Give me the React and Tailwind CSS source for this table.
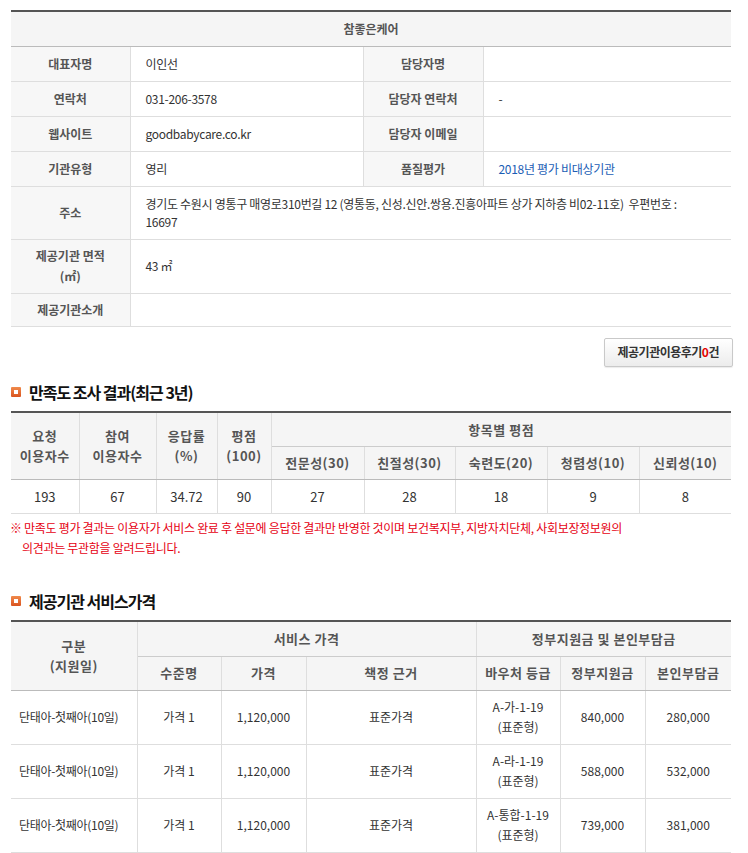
import React from 'react';

const font = { fontFamily: '"Noto Sans CJK KR", "Noto Sans", sans-serif' };

// label cell / value cell helpers for the info table
const Th = ({ children, className = '', ...rest }) => (
  <th {...rest} className={`bg-[#f7f7f7] border border-[#dedede] text-[12px] font-bold text-[#555] text-center align-middle ${className}`}>
    {children}
  </th>
);

const Td = ({ children, className = 'text-[#333]', ...rest }) => (
  <td {...rest} className={`border border-[#dedede] text-[12px] tracking-[-0.3px] pl-[15px] align-middle ${className}`}>
    {children}
  </td>
);

function SectionTitle({ children, className = '' }) {
  return (
    <div className={`flex items-center gap-[8px] h-[20px] pl-[11px] ${className}`}>
      <span className="w-[10px] h-[10px] rounded-[1px] bg-gradient-to-b from-[#f08a4b] to-[#d9531e] flex items-center justify-center">
        <span className="w-[4px] h-[4px] bg-white" />
      </span>
      <h3 className="text-[16px] font-bold text-[#111] tracking-[-1px]">{children}</h3>
    </div>
  );
}

const sat = {
  heads: ['전문성(30)', '친절성(30)', '숙련도(20)', '청렴성(10)', '신뢰성(10)'],
  values: ['193', '67', '34.72', '90', '27', '28', '18', '9', '8'],
};

const prices = [
  { grade: 'A-가-1-19', gov: '840,000', self: '280,000' },
  { grade: 'A-라-1-19', gov: '588,000', self: '532,000' },
  { grade: 'A-통합-1-19', gov: '739,000', self: '381,000' },
];

export default function App() {
  return (
    <div className="w-[748px] min-h-[853px] bg-white pt-[10px] overflow-hidden" style={font}>

      {/* --- 기관 정보 --- */}
      <table className="ml-[11px] w-[720px] table-fixed border-collapse border-t-2 border-t-[#555] border-b border-b-[#666] [&_tr>*:first-child]:border-l-0 [&_tr>*:last-child]:border-r-0">
        <colgroup>
          <col className="w-[119px]" />
          <col className="w-[233px]" />
          <col className="w-[120px]" />
          <col />
        </colgroup>
        <tbody>
          <tr className="h-[35px]">
            <th colSpan={4} className="bg-[#f5f5f5] border-b border-b-[#bbb] text-[12px] font-bold text-[#555] text-center">
              참좋은케어
            </th>
          </tr>
          <tr className="h-[35px]">
            <Th>대표자명</Th>
            <Td>이인선</Td>
            <Th>담당자명</Th>
            <Td></Td>
          </tr>
          <tr className="h-[35px]">
            <Th>연락처</Th>
            <Td>031-206-3578</Td>
            <Th>담당자 연락처</Th>
            <Td>-</Td>
          </tr>
          <tr className="h-[35px]">
            <Th>웹사이트</Th>
            <Td>goodbabycare.co.kr</Td>
            <Th>담당자 이메일</Th>
            <Td></Td>
          </tr>
          <tr className="h-[35px]">
            <Th>기관유형</Th>
            <Td>영리</Td>
            <Th>품질평가</Th>
            <Td className="text-[#1a5db5]">2018년 평가 비대상기관</Td>
          </tr>
          <tr className="h-[53px]">
            <Th>주소</Th>
            <Td colSpan={3} className="text-[#333] leading-[18px]">
              <span className="whitespace-nowrap">
                경기도 수원시 영통구 매영로310번길 12 (영통동, 신성.신안.쌍용.진흥아파트 상가 지하층 비02-11호)&nbsp; 우편번호 :
              </span>
              <br />
              16697
            </Td>
          </tr>
          <tr className="h-[54px]">
            <Th className="leading-[20px]">제공기관 면적<br />(㎡)</Th>
            <Td colSpan={3}>43 ㎡</Td>
          </tr>
          <tr className="h-[33px]">
            <Th>제공기관소개</Th>
            <Td colSpan={3}></Td>
          </tr>
        </tbody>
      </table>

      <div className="flex justify-end pr-[15px] mt-[11px]">
        <button className="h-[29px] px-[13px] rounded-[2px] border border-[#c9c9c9] bg-gradient-to-b from-white to-[#ececec] text-[12px] font-bold text-[#333] tracking-[-0.5px] shadow-[0_1px_1px_rgba(0,0,0,0.08)]">
          제공기관이용후기<span className="text-[#e30000]">0</span>건
        </button>
      </div>

      {/* --- 만족도 --- */}
      <SectionTitle className="mt-[15px]">만족도 조사 결과(최근 3년)</SectionTitle>

      <table className="ml-[11px] mt-[9px] w-[720px] table-fixed border-collapse border-t-2 border-t-[#555] border-b border-b-[#666] text-center [&_tr>*:first-child]:border-l-0 [&_tr>*:last-child]:border-r-0">
        <colgroup>
          <col className="w-[68px]" />
          <col className="w-[77px]" />
          <col className="w-[61px]" />
          <col className="w-[54px]" />
          <col className="w-[93px]" />
          <col className="w-[91px]" />
          <col className="w-[92px]" />
          <col className="w-[92px]" />
          <col />
        </colgroup>
        <thead className="text-[13px] font-bold text-[#555] bg-[#f5f5f5] tracking-[0.5px]">
          <tr className="h-[35px]">
            <th rowSpan={2} className="border border-[#dedede] border-b-[#bbb] leading-[20px]">요청<br />이용자수</th>
            <th rowSpan={2} className="border border-[#dedede] border-b-[#bbb] leading-[20px]">참여<br />이용자수</th>
            <th rowSpan={2} className="border border-[#dedede] border-b-[#bbb] leading-[20px]">응답률<br />(%)</th>
            <th rowSpan={2} className="border border-[#dedede] border-b-[#bbb] leading-[20px]">평점<br />(100)</th>
            <th colSpan={5} className="border border-[#dedede] border-b-[#ccc]">항목별 평점</th>
          </tr>
          <tr className="h-[33px]">
            {sat.heads.map((h) => (
              <th key={h} className="border border-[#dedede] border-b-[#bbb]">{h}</th>
            ))}
          </tr>
        </thead>
        <tbody>
          <tr className="h-[34px]">
            {sat.values.map((v, i) => (
              <td key={i} className="border border-[#dedede] text-[13px] text-[#333]">{v}</td>
            ))}
          </tr>
        </tbody>
      </table>

      <p className="mt-[4px] pl-[10px] text-[12px] leading-[20px] text-[#e60012] tracking-[-0.3px]">
        ※ 만족도 평가 결과는 이용자가 서비스 완료 후 설문에 응답한 결과만 반영한 것이며 보건복지부, 지방자치단체, 사회보장정보원의<br />
        <span className="pl-[12px]">의견과는 무관함을 알려드립니다.</span>
      </p>

      {/* --- 서비스 가격 --- */}
      <SectionTitle className="mt-[33px]">제공기관 서비스가격</SectionTitle>

      <table className="ml-[11px] mt-[9px] w-[720px] table-fixed border-collapse border-t-2 border-t-[#555] text-center [&_tr>*:first-child]:border-l-0 [&_tr>*:last-child]:border-r-0">
        <colgroup>
          <col className="w-[126px]" />
          <col className="w-[84px]" />
          <col className="w-[85px]" />
          <col className="w-[170px]" />
          <col className="w-[84px]" />
          <col className="w-[85px]" />
          <col />
        </colgroup>
        <thead className="text-[13px] font-bold text-[#555] bg-[#f5f5f5] tracking-[0.5px]">
          <tr className="h-[35px]">
            <th rowSpan={2} className="border border-[#dedede] border-b-[#bbb] leading-[20px] align-top pt-[14px]">구분<br />(지원일)</th>
            <th colSpan={3} className="border border-[#dedede] border-b-[#ccc]">서비스 가격</th>
            <th colSpan={3} className="border border-[#dedede] border-b-[#ccc]">정부지원금 및 본인부담금</th>
          </tr>
          <tr className="h-[34px]">
            {['수준명', '가격', '책정 근거', '바우처 등급', '정부지원금', '본인부담금'].map((h) => (
              <th key={h} className="border border-[#dedede] border-b-[#bbb]">{h}</th>
            ))}
          </tr>
        </thead>
        <tbody className="text-[12px] text-[#333]">
          {prices.map((p) => (
            <tr key={p.grade} className="h-[54px]">
              <td className="border border-[#dedede] text-left pl-[8px] tracking-[-0.3px]">단태아-첫째아(10일)</td>
              <td className="border border-[#dedede]">가격 1</td>
              <td className="border border-[#dedede]">1,120,000</td>
              <td className="border border-[#dedede]">표준가격</td>
              <td className="border border-[#dedede] leading-[20px]">{p.grade}<br />(표준형)</td>
              <td className="border border-[#dedede]">{p.gov}</td>
              <td className="border border-[#dedede]">{p.self}</td>
            </tr>
          ))}
          <tr className="h-[54px]">
            <td className="border border-[#dedede]"></td>
            <td className="border border-[#dedede]"></td>
            <td className="border border-[#dedede]"></td>
            <td className="border border-[#dedede]"></td>
            <td className="border border-[#dedede]"></td>
            <td className="border border-[#dedede]"></td>
            <td className="border border-[#dedede]"></td>
          </tr>
        </tbody>
      </table>
    </div>
  );
}
